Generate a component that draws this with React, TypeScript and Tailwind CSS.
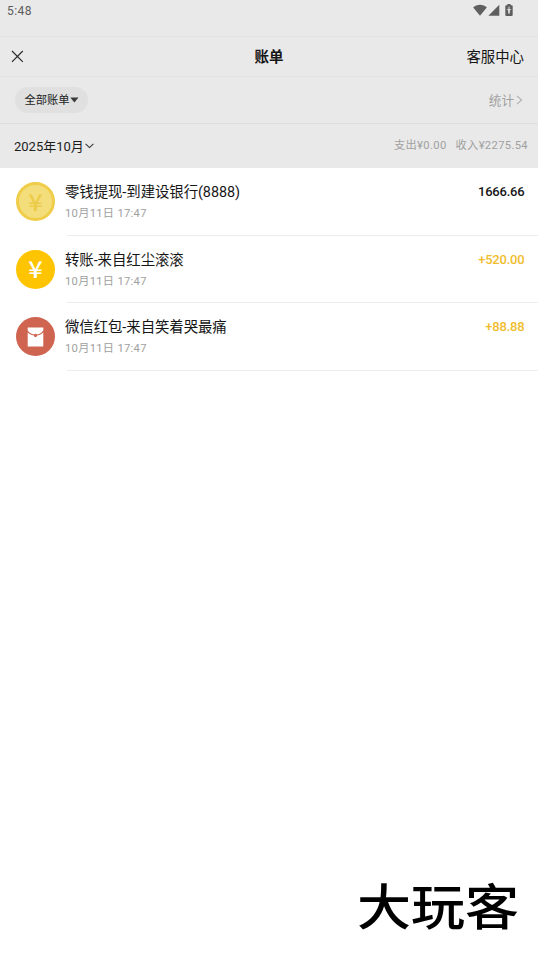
import clsx from 'clsx'

type BillKind = 'withdraw' | 'transfer' | 'redPacket'

interface Bill {
  id: number
  kind: BillKind
  title: string
  time: string
  amount: string
  income: boolean
}

const BILLS: Bill[] = [
  { id: 1, kind: 'withdraw', title: '零钱提现-到建设银行(8888)', time: '10月11日 17:47', amount: '1666.66', income: false },
  { id: 2, kind: 'transfer', title: '转账-来自红尘滚滚', time: '10月11日 17:47', amount: '+520.00', income: true },
  { id: 3, kind: 'redPacket', title: '微信红包-来自笑着哭最痛', time: '10月11日 17:47', amount: '+88.88', income: true },
]

function StatusBar() {
  return (
    <div className="flex h-9 items-start justify-between pl-[7px] pr-[24px]">
      <span className="mt-[4px] text-[12px] leading-[15px] tracking-[0.45px] text-[#5c5c5c]">5:48</span>
      <div className="mt-[4px] flex items-start">
        <svg width="14" height="12" viewBox="0 0 14 12" className="fill-[#5f5f5f]">
          <path d="M7 11.8 0.2 3.4C2 1.7 4.3 .8 7 .8s5 .9 6.8 2.6z" />
        </svg>
        <svg width="12" height="12" viewBox="0 0 12 12" className="ml-px fill-[#5f5f5f]">
          <path d="M11.3 .8V11.8H.4z" />
        </svg>
        <svg width="8" height="13" viewBox="0 0 8 13" className="ml-[5px] mr-px fill-[#5f5f5f]">
          <path d="M2.4 0h3.2v1.2h1.2c.5 0 .9.4.9.9v9c0 .5-.4.9-.9.9H1.2c-.5 0-.9-.4-.9-.9v-9c0-.5.4-.9.9-.9h1.2z" />
          <path d="M3.5 2.8h1v2.4h2L4.8 6.5v3.1H3.2V6.5L1.500 5.200h2z" className="fill-[#e9e9e9]" />
        </svg>
      </div>
    </div>
  )
}

function Header() {
  return (
    <header className="grid h-[40px] grid-cols-3 items-center border-t border-[#e2e2e2] pl-[11px] pr-[14px] text-[#161616]">
      <svg width="13" height="13" viewBox="0 0 13 13" className="stroke-[#2b2b2b]" strokeWidth="1.2">
        <path d="M1 1l10.8 10.8M11.8 1L1 11.8" />
      </svg>
      <h1 className="pl-[3px] pt-[2px] text-center text-[14.5px] font-bold leading-5">账单</h1>
      <span className="pt-[2px] text-right text-[14.4px] leading-5">客服中心</span>
    </header>
  )
}

function FilterBar() {
  return (
    <div className="flex h-[47px] items-center justify-between border-t border-[#e2e2e2] pl-[15px] pr-[15px]">
      <button className="flex h-[26px] w-[73px] items-center justify-center rounded-full bg-[#dfe0df] text-[11.3px] text-[#1c1c1c]">
        <span className="pt-[2px]">全部账单</span>
        <svg width="9" height="6" viewBox="0 0 9 6" className="fill-[#3a3a3a]">
          <path d="M.3 .4h8.2L4.4 5.6z" />
        </svg>
      </button>
      <div className="flex items-center text-[12.6px] text-[#a0a0a0]">
        <span className="pt-[2px]">统计</span>
        <svg width="7" height="10" viewBox="0 0 7 10" fill="none" className="ml-[2px] stroke-[#b0b0b0]" strokeWidth="1.1">
          <path d="M1 .8l4.6 4.2L1 9.2" />
        </svg>
      </div>
    </div>
  )
}

function MonthBar() {
  return (
    <div className="flex h-[45px] items-center justify-between border-t border-[#dedede] pl-[14px] pr-[10px]">
      <div className="flex items-center text-[13px] text-[#1c1c1c]">
        <span className="pt-[2px]">2025年10月</span>
        <svg width="9" height="6" viewBox="0 0 9 6" fill="none" className="ml-px stroke-[#333]" strokeWidth="1.1">
          <path d="M.6 .8l3.9 3.8L8.4 .8" />
        </svg>
      </div>
      <div className="flex gap-[9px] text-[11.2px] tracking-[0.35px] text-[#a0a0a0]">
        <span>支出¥0.00</span>
        <span>收入¥2275.54</span>
      </div>
    </div>
  )
}

function BillIcon({ kind }: { kind: BillKind }) {
  if (kind === 'redPacket') {
    return (
      <div className="flex size-[39px] items-center justify-center rounded-full bg-[#cf6450]">
        <svg width="17" height="20" viewBox="0 0 17 20">
          <path d="M.7 .6h15.6v3.2c-.5 1-.5 1.5 0 2v13.6H.7V5.8c.5-.5.5-1 0-2z" fill="#fff" />
          <path d="M.3 3.8C2 6.8 5 8.200 8.500 8.200s6.500-1.400 8.200-4.400" fill="none" stroke="#cf6450" strokeWidth="1.1" />
          <circle cx="8.5" cy="8.4" r="1.6" fill="#cf6450" />
        </svg>
      </div>
    )
  }

  return (
    <div
      className={clsx(
        'flex size-[39px] items-center justify-center rounded-full text-[23px] font-medium leading-none',
        kind === 'withdraw' ? 'border-[3px] border-[#f0cd48] bg-[#f4de7c] text-[#eccb49]' : 'bg-[#fec400] text-white'
      )}
    >
      <span className="mb-px scale-x-110 font-[Noto_Sans_CJK_SC,sans-serif]">¥</span>
    </div>
  )
}

function BillRow({ bill }: { bill: Bill }) {
  return (
    <li className="flex h-[67.5px] pl-[16px]">
      <div className="pt-[14px]">
        <BillIcon kind={bill.kind} />
      </div>
      <div className="relative ml-[10px] flex flex-1 justify-between pr-[13.5px] pt-[14px]">
        <div>
          <p className="pt-px text-[14.4px] leading-5 tracking-[-0.05px] text-[#161616]">{bill.title}</p>
          <p className="mt-[3px] text-[11.2px] leading-4 tracking-[0.3px] text-[#a0a0a0]">{bill.time}</p>
        </div>
        <span
          className={clsx(
            'text-[13px] font-medium leading-5 tracking-[-0.2px]',
            bill.income ? 'text-[#f0bd2e]' : 'text-[#161616]'
          )}
        >
          {bill.amount}
        </span>
        <div className="absolute bottom-0 left-[2px] right-0 h-px bg-[#ededed]" />
      </div>
    </li>
  )
}

export default function App() {
  return (
    <div className="flex h-[956px] w-[538px] flex-col overflow-hidden bg-white font-[Roboto,'Noto_Sans_CJK_SC',sans-serif]">
      <div className="bg-[#e9e9e9]">
        <StatusBar />
        <Header />
        <FilterBar />
        <MonthBar />
      </div>
      <ul>
        {BILLS.map((bill) => (
          <BillRow key={bill.id} bill={bill} />
        ))}
      </ul>
      <div className="mb-[19px] mr-[19px] mt-auto origin-center scale-y-[0.9] self-end text-[54px] font-medium leading-[56px] text-black">
        大玩客
      </div>
    </div>
  )
}
